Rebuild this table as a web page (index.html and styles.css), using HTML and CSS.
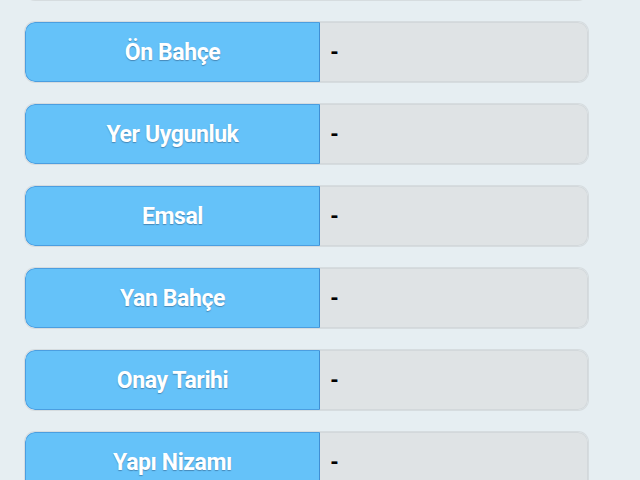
FILE: index.html
```html
<!DOCTYPE html>
<html lang="tr">
<head>
<meta charset="utf-8">
<link rel="stylesheet" href="styles.css">
</head>
<body>
<div class="page">
  <div class="list">
    <div class="row"><div class="label"></div><div class="value"></div></div>
    <div class="row"><div class="label">Ön Bahçe</div><div class="value">-</div></div>
    <div class="row"><div class="label">Yer Uygunluk</div><div class="value">-</div></div>
    <div class="row"><div class="label">Emsal</div><div class="value">-</div></div>
    <div class="row"><div class="label">Yan Bahçe</div><div class="value">-</div></div>
    <div class="row"><div class="label">Onay Tarihi</div><div class="value">-</div></div>
    <div class="row"><div class="label">Yapı Nizamı</div><div class="value">-</div></div>
  </div>
</div>
</body>
</html>
```

FILE: styles.css
```css
html, body {
  margin: 0;
  padding: 0;
  height: 480px;
  overflow: hidden;
}
body {
  background: #e6eef2;
  font-family: Roboto, "Noto Sans", sans-serif;
}
.page {
  display: flex;
  padding-left: 25px;
}
.list {
  display: flex;
  flex-direction: column;
  gap: 22px;
  width: 563px;
  margin-top: -60px;
}
.row {
  display: flex;
  height: 60px;
  border-radius: 10px;
  overflow: hidden;
  box-shadow: 0 0 0 1px #d6dcdf;
}
.label {
  width: 295px;
  flex: none;
  box-sizing: border-box;
  background: #65c2f9;
  border: 1px solid #4b9ee0;
  border-right: 1px solid #3f8fd4;
  border-radius: 10px 0 0 10px;
  display: flex;
  align-items: center;
  justify-content: center;
  color: #ffffff;
  font-weight: 700;
  font-size: 23px;
  letter-spacing: -0.4px;
  text-shadow: 0 1px 1px rgba(40, 80, 120, 0.5);
}
.value {
  flex: 1;
  box-sizing: border-box;
  background: #dfe3e5;
  border: 1px solid #d3d8db;
  border-left: none;
  border-radius: 0 10px 10px 0;
  display: flex;
  align-items: center;
  padding-left: 10px;
  color: #000;
  font-weight: 900;
  font-size: 20px;
}
```
